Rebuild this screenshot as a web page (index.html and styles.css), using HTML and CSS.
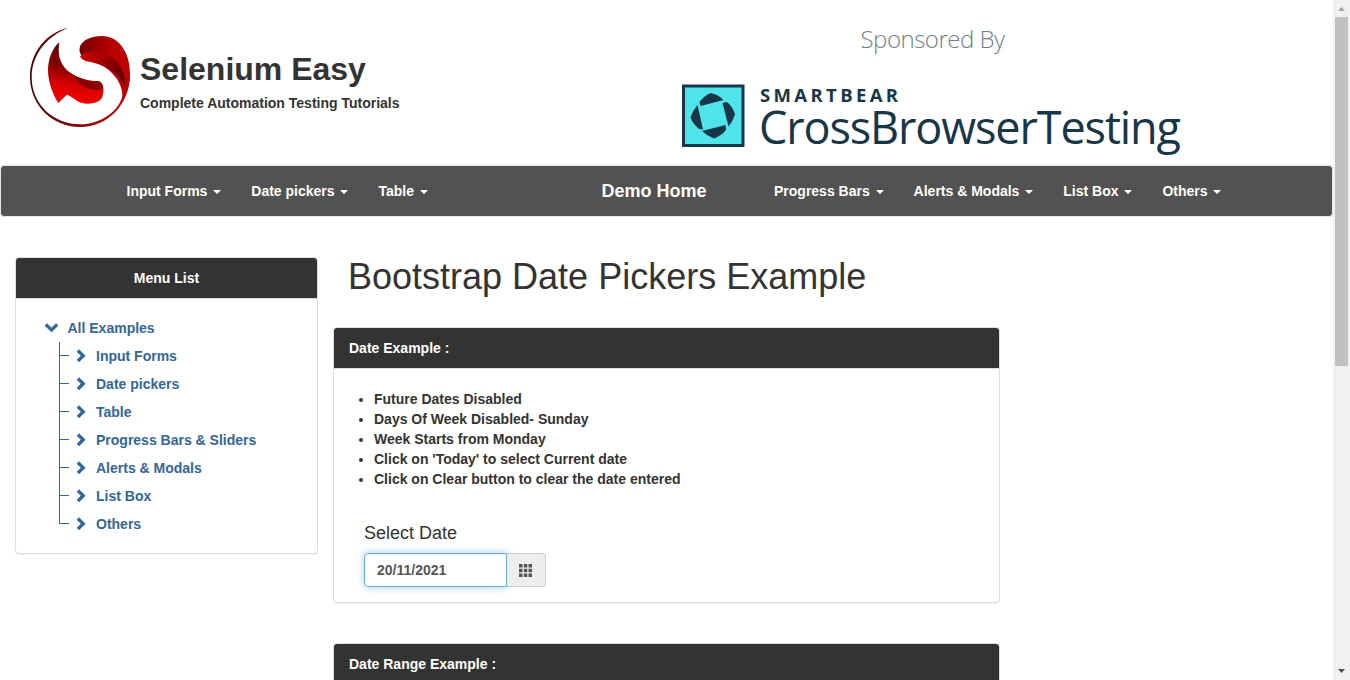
FILE: index.html
```html
<!DOCTYPE html>
<html lang="en">
<head>
<meta charset="utf-8">
<title>Selenium Easy - Bootstrap Date Pickers Example</title>
<link rel="stylesheet" href="styles.css">
</head>
<body>
<div class="page">
  <header class="header">
    <a class="brand">
      <svg class="brand-logo" viewBox="15 20 300 300">
        <defs>
          <linearGradient id="ring" x1="0" y1="0" x2="1" y2="0"><stop offset="0" stop-color="#4a0000"/><stop offset=".5" stop-color="#8a0000"/><stop offset="1" stop-color="#d00000"/></linearGradient>
          <linearGradient id="top" x1="0" y1="0" x2="1" y2=".3"><stop offset="0" stop-color="#700000"/><stop offset=".6" stop-color="#b80000"/><stop offset="1" stop-color="#c00000"/></linearGradient>
          <linearGradient id="fold" x1="0" y1="0" x2="1" y2=".6"><stop offset="0" stop-color="#d80000"/><stop offset=".4" stop-color="#a80000"/><stop offset="1" stop-color="#600000"/></linearGradient>
          <linearGradient id="left" gradientUnits="userSpaceOnUse" x1="70" y1="140" x2="115" y2="110"><stop offset="0" stop-color="#b80000"/><stop offset="1" stop-color="#600000"/></linearGradient>
          <linearGradient id="low" gradientUnits="userSpaceOnUse" x1="130" y1="130" x2="115" y2="235"><stop offset="0" stop-color="#780000"/><stop offset=".6" stop-color="#d80000"/><stop offset="1" stop-color="#f00000"/></linearGradient>
        </defs>
        <path fill="url(#ring)" d="M130 22C65 36 15 95 15 170C15 254 82 320 165 320C248 320 315 252 315 160L296 200C298 262 235 312 165 312C85 312 20 252 20 170C20 103 65 48 130 22Z"/>
        <path fill="url(#top)" d="M174 112C150 84 168 50 230 47C280 46 315 95 315 160C315 190 308 218 292 246C300 180 250 138 200 122Z"/>
        <path fill="url(#fold)" d="M165 108C187 90 232 90 262 112C285 130 305 160 299 204C290 160 240 132 182 122C174 119 168 114 165 108Z"/>
        <path fill="url(#left)" d="M103 66C81 85 68 119 69 154C71 190 85 223 100 247L150 200L150 166C118 150 94 120 103 66Z"/>
        <path fill="url(#low)" d="M77 112C90 104 100 118 108 130C116 144 124 153 132 157C161 173 192 184 218 182C237 185 239 211 231 232C220 252 174 257 151 238C141 231 132 226 123 222L100 247C79 216 66 170 77 112Z"/>
        <path fill="#8c0000" d="M144 163C170 177 193 183 218 182C229 184 234 191 233 203C218 214 190 207 174 198C160 190 151 176 144 163Z"/>
      </svg>
      <span class="brand-text"><span class="brand-name">Selenium Easy</span><span class="slogan">Complete Automation Testing Tutorials</span></span>
    </a>
    <svg class="sponsor" viewBox="0 0 520 140">
      <text class="sponsor-by" x="179.500" y="33" textLength="144.500">Sponsored By</text>
      <rect x="2.500" y="71" width="59.5" height="59.5" fill="#4fe3ea" stroke="#173647" stroke-width="3"/>
      <g fill="#173647">
        <path d="M18.500 87Q24 80 30 78Q38 80 42.500 85L19.500 91Z"/>
        <path d="M41.500 88L46 87Q52 92 54 99.500Q52 106 47.500 111.500Z"/>
        <path d="M44.500 110L45 115Q40 121 33 123.500Q26 121 21 116Z"/>
        <path d="M16.500 90L22 114.500L18 114Q12 109 9.500 102.500Q12 95 16.500 90Z"/>
      </g>
      <text class="smartbear" x="79" y="86.500" textLength="138">SMARTBEAR</text>
      <text class="cbt" x="78" y="129" textLength="422">CrossBrowserTesting</text>
    </svg>
  </header>

  <nav class="navbar">
    <ul class="nav nav-left">
      <li>Input Forms <b class="caret"></b></li>
      <li>Date pickers <b class="caret"></b></li>
      <li>Table <b class="caret"></b></li>
    </ul>
    <a class="nav-home">Demo Home</a>
    <ul class="nav nav-right">
      <li>Progress Bars <b class="caret"></b></li>
      <li>Alerts &amp; Modals <b class="caret"></b></li>
      <li>List Box <b class="caret"></b></li>
      <li>Others <b class="caret"></b></li>
    </ul>
  </nav>

  <div class="content">
    <aside class="panel side">
      <h3 class="panel-heading centered">Menu List</h3>
      <div class="tree">
        <a class="tree-root"><svg class="chev" viewBox="0 0 14 14"><path d="M1.800 3.500L7.500 9L13.200 3.500"/></svg>All Examples</a>
        <ul class="tree-list">
          <li><svg class="chev" viewBox="0 0 14 14"><path d="M3.900 1.500L9.200 6.800L3.900 12"/></svg>Input Forms</li>
          <li><svg class="chev" viewBox="0 0 14 14"><path d="M3.900 1.500L9.200 6.800L3.900 12"/></svg>Date pickers</li>
          <li><svg class="chev" viewBox="0 0 14 14"><path d="M3.900 1.500L9.200 6.800L3.900 12"/></svg>Table</li>
          <li><svg class="chev" viewBox="0 0 14 14"><path d="M3.900 1.500L9.200 6.800L3.900 12"/></svg>Progress Bars &amp; Sliders</li>
          <li><svg class="chev" viewBox="0 0 14 14"><path d="M3.900 1.500L9.200 6.800L3.900 12"/></svg>Alerts &amp; Modals</li>
          <li><svg class="chev" viewBox="0 0 14 14"><path d="M3.900 1.500L9.200 6.800L3.900 12"/></svg>List Box</li>
          <li><svg class="chev" viewBox="0 0 14 14"><path d="M3.900 1.500L9.200 6.800L3.900 12"/></svg>Others</li>
        </ul>
      </div>
    </aside>

    <main class="main">
      <h1 class="title">Bootstrap Date Pickers Example</h1>
      <section class="panel">
        <h3 class="panel-heading">Date Example :</h3>
        <div class="panel-body">
          <ul class="notes">
            <li>Future Dates Disabled</li>
            <li>Days Of Week Disabled- Sunday</li>
            <li>Week Starts from Monday</li>
            <li>Click on 'Today' to select Current date</li>
            <li>Click on Clear button to clear the date entered</li>
          </ul>
          <div class="field">
            <label class="field-label">Select Date</label>
            <div class="input-group">
              <div class="input">20/11/2021</div>
              <div class="addon">
                <svg class="grid-icon" viewBox="0 0 13 13"><path d="M0 0h3.500v3.500H0zM4.800 0h3.500v3.500H4.800zM9.500 0H13v3.500H9.500zM0 4.800h3.500v3.500H0zM4.800 4.800h3.500v3.500H4.800zM9.500 4.800H13v3.500H9.500zM0 9.500h3.500V13H0zM4.800 9.500h3.500V13H4.800zM9.500 9.500H13V13H9.500z"/></svg>
              </div>
            </div>
          </div>
        </div>
      </section>
      <section class="panel">
        <h3 class="panel-heading">Date Range Example :</h3>
        <div class="panel-body"></div>
      </section>
    </main>
  </div>
</div>
<div class="scrollbar">
  <svg class="arrow arrow-up" viewBox="0 0 7 4"><path d="M0 4L3.500 0L7 4z"/></svg>
  <div class="thumb"></div>
  <svg class="arrow arrow-down" viewBox="0 0 7 4"><path d="M0 0L3.500 4L7 0z"/></svg>
</div>
</body>
</html>
```
FILE: styles.css
```css
* { box-sizing: border-box; }
body {
  margin: 0;
  height: 680px;
  display: flex;
  overflow: hidden;
  background: #fff;
  color: #333;
  font: bold 14px/20px "Liberation Sans", Arial, sans-serif;
}
ul, h1, h3 { margin: 0; padding: 0; }
.page { width: 1333px; height: 680px; overflow: hidden; }

.header { display: flex; height: 165px; padding-left: 30px; }
.brand { display: flex; gap: 10px; width: 651px; padding-top: 27px; }
.brand-logo { width: 100px; height: 100px; }
.brand-text { display: flex; flex-direction: column; padding-top: 22px; white-space: nowrap; }
.brand-name { font-size: 32px; line-height: 40px; }
.slogan { margin-top: 4px; font-size: 14px; }
.sponsor { width: 520px; height: 140px; margin-top: 15px; overflow: visible; }
.sponsor-by { font: 300 24px "Open Sans", sans-serif; fill: #71818c; }
.smartbear { font: 700 18.5px "Open Sans", sans-serif; fill: #173647; }
.cbt { font: 400 45px "Open Sans", sans-serif; fill: #173647; }

.navbar {
  display: flex;
  height: 52px;
  border: 1px solid #e7e7e7;
  border-radius: 4px;
  background: #525252;
  color: #fff;
  line-height: 50px;
  white-space: nowrap;
}
.nav { display: flex; gap: 30px; list-style: none; }
.nav-left { width: 475px; margin-left: 125.5px; }
.nav-home { width: 172.5px; font-size: 18px; }
.caret {
  display: inline-block;
  margin-left: 2px;
  vertical-align: middle;
  border-top: 4px solid #fff;
  border-left: 4px solid transparent;
  border-right: 4px solid transparent;
}

.content { display: flex; gap: 15px; padding: 40px 0 0 15px; }
.panel {
  border: 1px solid #ddd;
  border-radius: 4px;
  background: #fff;
  box-shadow: 0 1px 1px rgba(0, 0, 0, 0.05);
}
.panel-heading {
  height: 41px;
  padding: 10px 15px;
  border-bottom: 1px solid #ddd;
  border-radius: 3px 3px 0 0;
  background: #333;
  color: #fff;
  font-size: 14px;
}
.centered { text-align: center; }
.side { width: 303px; height: 297px; }
.tree { padding: 15px 0 0 28px; color: #369; }
.chev { width: 14px; height: 14px; flex: none; fill: none; stroke: #369; stroke-width: 3.3; }
.tree-root { display: flex; align-items: center; gap: 9.5px; height: 28px; }
.tree-list { margin-left: 15px; list-style: none; }
.tree-list li {
  display: flex;
  align-items: center;
  height: 28px;
  background:
    linear-gradient(#369, #369) 0 0 / 1px 28px no-repeat,
    linear-gradient(#369, #369) 0 13px / 10px 1px no-repeat;
}
.tree-list li:last-child {
  background:
    linear-gradient(#369, #369) 0 0 / 1px 14px no-repeat,
    linear-gradient(#369, #369) 0 13px / 10px 1px no-repeat;
}
.tree-list .chev { margin: 0 8px 0 15px; }

.main { width: 667px; }
.title { height: 70px; padding-left: 15px; font-size: 36px; font-weight: 400; line-height: 40px; white-space: nowrap; }
.main .panel { height: 276px; margin-bottom: 40px; }
.panel-body { padding: 20px 30px; }
.notes { padding-left: 10px; }
.field { padding-top: 34px; }
.field-label { display: block; font-size: 18px; font-weight: 400; }
.input-group { display: flex; width: 182px; height: 34px; margin-top: 10px; }
.input {
  width: 143px;
  padding: 6px 12px;
  border: 1px solid #66afe9;
  border-radius: 4px 0 0 4px;
  box-shadow: inset 0 1px 1px rgba(0, 0, 0, 0.075), 0 0 8px rgba(102, 175, 233, 0.6);
  color: #555;
}
.addon {
  display: flex;
  align-items: center;
  width: 39px;
  padding-left: 12px;
  border: 1px solid #ccc;
  border-left: 0;
  border-radius: 0 4px 4px 0;
  background: #eee;
}
.grid-icon { width: 13px; height: 13px; fill: #555; }

.scrollbar { display: flex; flex-direction: column; align-items: center; width: 17px; height: 680px; background: #f1f1f1; }
.thumb { width: 13px; height: 349px; margin-top: 6px; background: #c1c1c1; }
.arrow { width: 7px; height: 4px; }
.arrow-up { margin-top: 7px; fill: #a3a3a3; }
.arrow-down { margin-top: auto; margin-bottom: 7px; fill: #505050; }
```
